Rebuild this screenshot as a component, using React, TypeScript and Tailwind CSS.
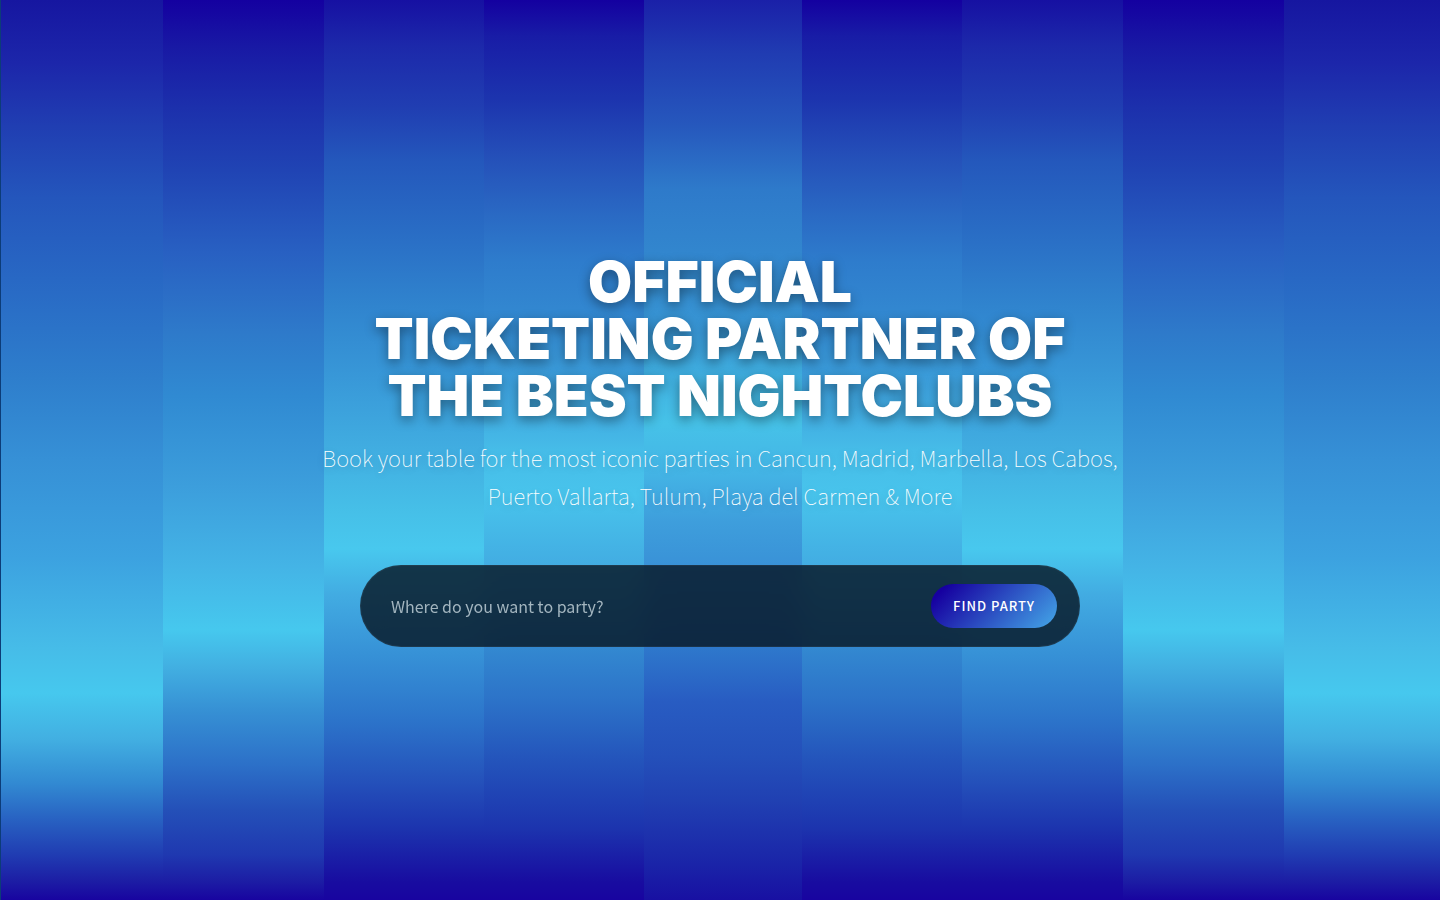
import { useState } from "react";

// The stripes mirror around the centre one, so only five gradients are needed
const OUTER =
    "bg-[linear-gradient(to_bottom,#1616a0_0%,#1c26aa_7%,#203eb2_14%,#2456bc_22%,#2868c4_31%,#2e7ecc_42%,#3690d6_51%,#3ca2e0_62%,#46bce8_72%,#46c8ee_77%,#42b0e2_82%,#328ad2_87%,#2862c2_91%,#203cb2_95%,#1c1ca4_98%,#1804a0_100%)]";
const SECOND =
    "bg-[linear-gradient(to_bottom,#1400a0_0%,#1818a4_5%,#1c30ac_12%,#2044b4_19%,#2860c2_28%,#2e7aca_37%,#308ad2_44%,#3c9edc_54%,#44b4e6_63%,#46c8ee_70%,#42b0e2_74%,#3690d4_79%,#2c70c8_85%,#2450b8_90%,#1f38b0_95%,#1c1ca4_98%,#1804a0_100%)]";
const THIRD =
    "bg-[linear-gradient(to_bottom,#1610a2_0%,#1c28aa_5%,#203eb2_12%,#2458bc_18%,#2a70c6_27%,#3084ce_34%,#3898d8_42%,#42b0e2_51%,#46c0e8_57%,#48c8ee_61%,#42ace2_66%,#3690d6_73%,#2c74ca_80%,#2450ba_87%,#1c34ae_92%,#180ca0_98%,#1804a0_100%)]";
const FOURTH =
    "bg-[linear-gradient(to_bottom,#1400a0_0%,#181ca6_4%,#1c34ae_11%,#244eb8_17%,#2a6ac4_24%,#2e7ccc_29%,#348cd2_37%,#40a8e0_45%,#46bce8_50%,#48c4ec_55%,#42ace2_63%,#348cd2_71%,#2c72c8_78%,#2456bc_84%,#1c34ae_92%,#180ca0_98%,#1804a0_100%)]";
const CENTRE =
    "bg-[linear-gradient(to_bottom,#1a20a8_0%,#203cb2_6%,#2658bd_14%,#2e7aca_21%,#3286ce_28%,#3896d4_37%,#40b0e0_42%,#46c2e8_47%,#44b6e6_52%,#3e9edc_58%,#3a94d8_62%,#2e78cc_72%,#285cc2_78%,#2450ba_84%,#2040b2_89%,#1a24a8_96%,#1810a2_100%)]";

const stripes = [OUTER, SECOND, THIRD, FOURTH, CENTRE, FOURTH, THIRD, SECOND, OUTER];

function StripedBackdrop() {
    return (
        <div
            aria-hidden="true"
            className="col-start-1 row-start-1 grid grid-cols-[162fr_161fr_160fr_160fr_159fr_160fr_161fr_161fr_156fr] border-l border-[#0c3c78]"
        >
            {stripes.map((gradient, i) => (
                <div key={i} className={gradient} />
            ))}
        </div>
    );
}

function SearchForm() {
    const [query, setQuery] = useState("");

    return (
        <form
            onSubmit={(e) => e.preventDefault()}
            className="mt-[51px] flex w-full max-w-[720px] items-center rounded-full border border-white/5 bg-[#061420]/80 py-[18px] pr-[22px] pl-[30px] backdrop-blur-md"
        >
            <input
                type="text"
                aria-label="Where do you want to party?"
                placeholder="Where do you want to party?"
                value={query}
                onChange={(e) => setQuery(e.target.value)}
                className="min-w-0 flex-1 bg-transparent text-base text-white outline-none placeholder:text-[#a3b5bf]"
            />
            <button
                type="submit"
                className="h-11 shrink-0 rounded-full bg-[linear-gradient(135deg,#1600a0_10%,#44a8e8_100%)] px-[22px] text-[13px] font-medium tracking-[1px] text-white uppercase"
            >
                Find Party
            </button>
        </form>
    );
}

export default function App() {
    return (
        <main className="grid min-h-screen font-['Noto_Sans_CJK_SC',sans-serif]">
            <StripedBackdrop />
            <section className="z-10 col-start-1 row-start-1 flex flex-col items-center justify-center px-6 text-center text-white">
                <h1 className="font-['Inter',sans-serif] text-[57px] leading-[57px] font-black uppercase [text-shadow:0_4px_12px_rgba(0,0,0,0.4)]">
                    Official
                    <br />
                    Ticketing Partner of
                    <br />
                    The Best Nightclubs
                </h1>
                <p className="mt-3.5 max-w-[820px] text-[22px] leading-[38px] font-thin text-white [text-shadow:0_2px_8px_rgba(0,0,0,0.2)]">
                    Book your table for the most iconic parties in Cancun, Madrid, Marbella, Los Cabos,
                    Puerto Vallarta, Tulum, Playa del Carmen &amp; More
                </p>
                <SearchForm />
            </section>
        </main>
    );
}
